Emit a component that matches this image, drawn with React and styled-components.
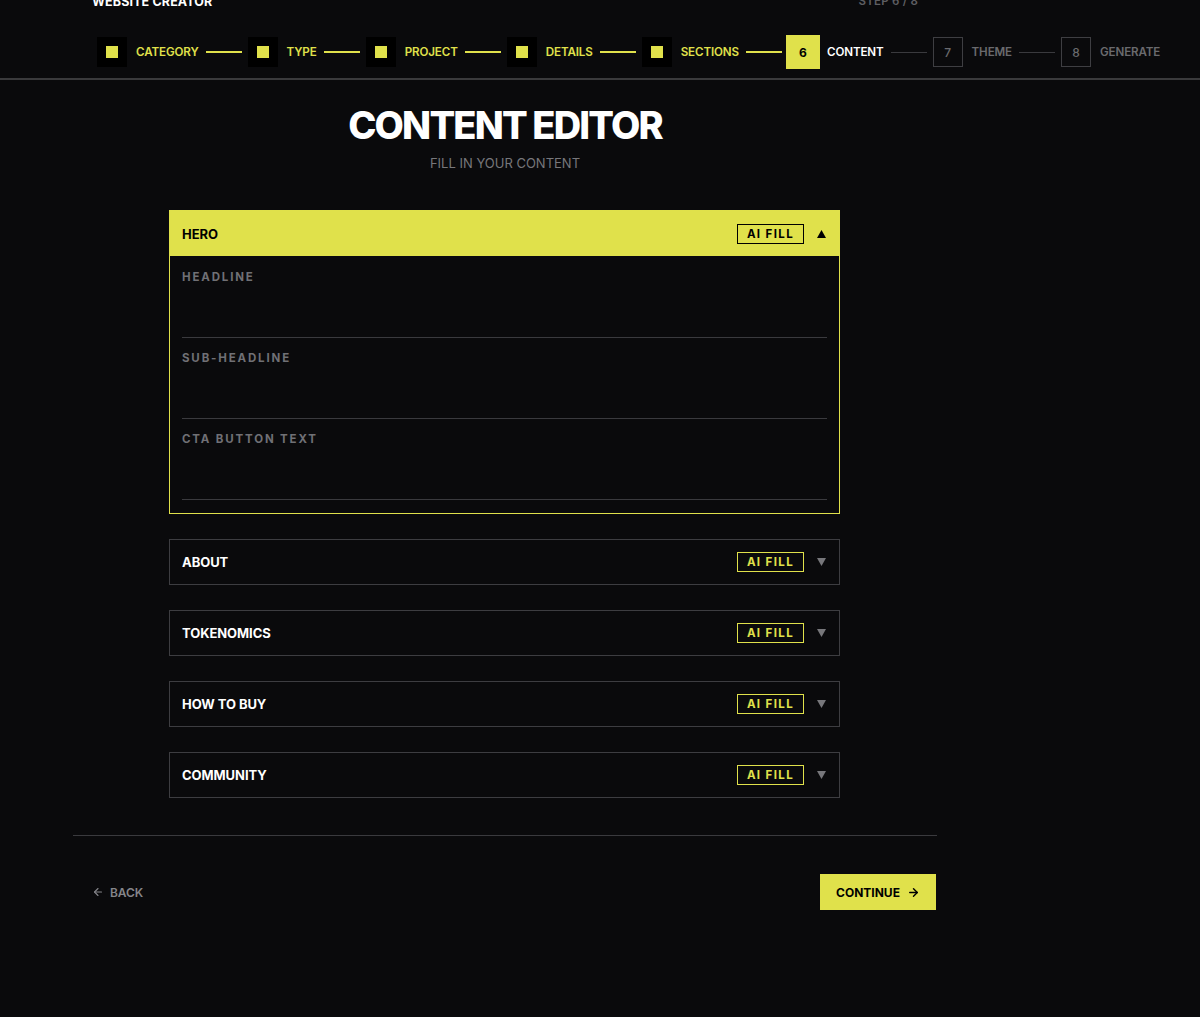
import React from "react";
import styled, { createGlobalStyle } from "styled-components";
import { ArrowLeft, ArrowRight } from "lucide-react";

const Y = "#e0e14b";
const BG = "#0a0a0c";

const Global = createGlobalStyle`
  html, body { margin: 0; padding: 0; background: ${BG}; }
  body { font-family: Inter, "Noto Sans", sans-serif; color: #fff; overflow-x: hidden; }
  * { box-sizing: border-box; }
`;

const Page = styled.div`
  min-height: 1017px;
  background: ${BG};
`;

const Header = styled.header`
  margin-top: -7px;
  border-bottom: 2px solid #3a3a3c;
  padding-bottom: 9px;
`;

const HeaderInner = styled.div`
  width: 864px;
  margin-left: 73px;
`;

const TopRow = styled.div`
  display: flex;
  justify-content: space-between;
  align-items: center;
  height: 16px;
  padding: 0 19px;
`;

const Brand = styled.div`
  font-size: 12.5px;
  font-weight: 700;
  letter-spacing: 0.01em;
  color: #fff;
`;

const StepCount = styled.div`
  font-size: 11.5px;
  font-weight: 600;
  letter-spacing: 0.02em;
  color: #5e5e62;
`;

const Stepper = styled.div`
  display: flex;
  align-items: center;
  margin-top: 26px;
  padding-left: 24px;
  height: 34px;
  white-space: nowrap;
  width: max-content;
`;

const Step = styled.div`
  display: flex;
  align-items: center;
  gap: 9px;
  flex-shrink: 0;
`;

const StepBox = styled.div`
  width: ${(p) => (p.$active ? 34 : 30)}px;
  height: ${(p) => (p.$active ? 34 : 30)}px;
  margin: 0 ${(p) => (p.$active ? -2 : 0)}px;
  display: flex;
  align-items: center;
  justify-content: center;
  font-size: 12px;
  font-weight: ${(p) => (p.$active ? 700 : 500)};
  background: ${(p) => (p.$state === "done" ? "#000" : p.$state === "active" ? Y : "transparent")};
  border: ${(p) => (p.$state === "todo" ? "1px solid #3e3e42" : "none")};
  color: ${(p) => (p.$state === "active" ? "#000" : "#6a6a6e")};
`;

const Dot = styled.span`
  width: 12px;
  height: 12px;
  background: ${Y};
`;

const StepLabel = styled.span`
  font-size: 11.6px;
  font-weight: 600;
  letter-spacing: -0.01em;
  color: ${(p) => (p.$state === "done" ? Y : p.$state === "active" ? "#fff" : "#6a6a6e")};
`;

const Connector = styled.span`
  width: 36px;
  height: ${(p) => (p.$done ? 2 : 1)}px;
  margin: 0 6px 0 7px;
  background: ${(p) => (p.$done ? Y : "#3a3a3e")};
  flex-shrink: 0;
`;

const Main = styled.main`
  width: 864px;
  margin-left: 73px;
  padding-top: 26px;
`;

const Title = styled.h1`
  margin: 0;
  text-align: center;
  font-size: 38px;
  line-height: 38px;
  font-weight: 800;
  letter-spacing: -0.048em;
  color: #fff;
`;

const Subtitle = styled.p`
  margin: 9px 0 0;
  text-align: center;
  font-size: 13px;
  line-height: 20px;
  color: #77777b;
  letter-spacing: 0;
`;

const Sections = styled.div`
  display: flex;
  flex-direction: column;
  gap: 25px;
  padding: 0 97px 0 96px;
  margin-top: 37px;
`;

const Card = styled.section`
  border: 1px solid ${(p) => (p.$open ? Y : "#3d3d41")};
  background: ${BG};
`;

const CardHead = styled.div`
  height: ${(p) => (p.$open ? 45 : 44)}px;
  display: flex;
  align-items: center;
  padding: 0 13px 0 12px;
  background: ${(p) => (p.$open ? Y : "transparent")};
`;

const CardTitle = styled.span`
  flex: 1;
  font-size: 13px;
  font-weight: 700;
  letter-spacing: -0.005em;
  color: ${(p) => (p.$open ? "#000" : "#fff")};
`;

const AiFill = styled.button`
  height: 20px;
  width: 67px;
  padding: 0;
  background: transparent;
  border: 1.5px solid ${(p) => (p.$open ? "#000" : Y)};
  color: ${(p) => (p.$open ? "#000" : Y)};
  font-family: inherit;
  font-size: 11.5px;
  font-weight: 700;
  letter-spacing: 0.12em;
  cursor: pointer;
`;

const Chevron = styled.svg`
  margin-left: 13px;
  width: 9px;
  height: 8px;
  display: block;
`;

const CardBody = styled.div`
  padding: 14px 12px 13px 12px;
  display: flex;
  flex-direction: column;
  gap: 13px;
`;

const Field = styled.label`
  display: flex;
  flex-direction: column;
  gap: 8px;
`;

const FieldLabel = styled.span`
  font-size: 11.5px;
  line-height: 14px;
  font-weight: 700;
  letter-spacing: 0.16em;
  color: #707075;
`;

const Input = styled.input`
  height: 46px;
  background: transparent;
  border: none;
  border-bottom: 1px solid #3a3a3e;
  outline: none;
  color: #fff;
  font-family: inherit;
  font-size: 15px;
  padding: 0;
`;

const Divider = styled.hr`
  margin: 37px 0 0;
  border: none;
  height: 1px;
  background: #3a3a3e;
`;

const Footer = styled.div`
  display: flex;
  justify-content: space-between;
  align-items: center;
  margin-top: 38px;
`;

const BackBtn = styled.button`
  display: flex;
  align-items: center;
  gap: 6px;
  background: transparent;
  border: none;
  padding: 8px 19px;
  color: #85858a;
  font-family: inherit;
  font-size: 12px;
  font-weight: 600;
  letter-spacing: -0.01em;
  cursor: pointer;
`;

const ContinueBtn = styled.button`
  display: flex;
  align-items: center;
  justify-content: center;
  gap: 7px;
  width: 116px;
  height: 36px;
  margin-right: 1px;
  background: ${Y};
  border: none;
  color: #000;
  font-family: inherit;
  font-size: 12px;
  font-weight: 700;
  letter-spacing: 0;
  cursor: pointer;
`;

const steps = [
  { n: 1, label: "CATEGORY", state: "done" },
  { n: 2, label: "TYPE", state: "done" },
  { n: 3, label: "PROJECT", state: "done" },
  { n: 4, label: "DETAILS", state: "done" },
  { n: 5, label: "SECTIONS", state: "done" },
  { n: 6, label: "CONTENT", state: "active" },
  { n: 7, label: "THEME", state: "todo" },
  { n: 8, label: "GENERATE", state: "todo" },
];

const sections = ["HERO", "ABOUT", "TOKENOMICS", "HOW TO BUY", "COMMUNITY"];
const heroFields = ["HEADLINE", "SUB-HEADLINE", "CTA BUTTON TEXT"];

function Tri({ up, color }) {
  return (
    <Chevron viewBox="0 0 9 8">
      {up ? <polygon points="4.5,0 9,8 0,8" fill={color} /> : <polygon points="0,0 9,0 4.5,8" fill={color} />}
    </Chevron>
  );
}

export default function App() {
  return (
    <Page>
      <Global />
      <Header>
        <HeaderInner>
          <TopRow>
            <Brand>WEBSITE CREATOR</Brand>
            <StepCount>STEP 6 / 8</StepCount>
          </TopRow>
          <Stepper>
            {steps.map((s, i) => (
              <React.Fragment key={s.n}>
                <Step>
                  <StepBox $state={s.state} $active={s.state === "active"}>
                    {s.state === "done" ? <Dot /> : s.n}
                  </StepBox>
                  <StepLabel $state={s.state}>{s.label}</StepLabel>
                </Step>
                {i < steps.length - 1 && <Connector $done={s.state === "done"} />}
              </React.Fragment>
            ))}
          </Stepper>
        </HeaderInner>
      </Header>
      <Main>
        <Title>CONTENT EDITOR</Title>
        <Subtitle>FILL IN YOUR CONTENT</Subtitle>
        <Sections>
          {sections.map((name, i) => {
            const open = i === 0;
            return (
              <Card key={name} $open={open}>
                <CardHead $open={open}>
                  <CardTitle $open={open}>{name}</CardTitle>
                  <AiFill $open={open}>AI FILL</AiFill>
                  <Tri up={open} color={open ? "#000" : "#77777b"} />
                </CardHead>
                {open && (
                  <CardBody>
                    {heroFields.map((f) => (
                      <Field key={f}>
                        <FieldLabel>{f}</FieldLabel>
                        <Input type="text" />
                      </Field>
                    ))}
                  </CardBody>
                )}
              </Card>
            );
          })}
        </Sections>
        <Divider />
        <Footer>
          <BackBtn>
            <ArrowLeft size={12} strokeWidth={2.2} />
            BACK
          </BackBtn>
          <ContinueBtn>
            CONTINUE
            <ArrowRight size={13} strokeWidth={2.6} />
          </ContinueBtn>
        </Footer>
      </Main>
    </Page>
  );
}
